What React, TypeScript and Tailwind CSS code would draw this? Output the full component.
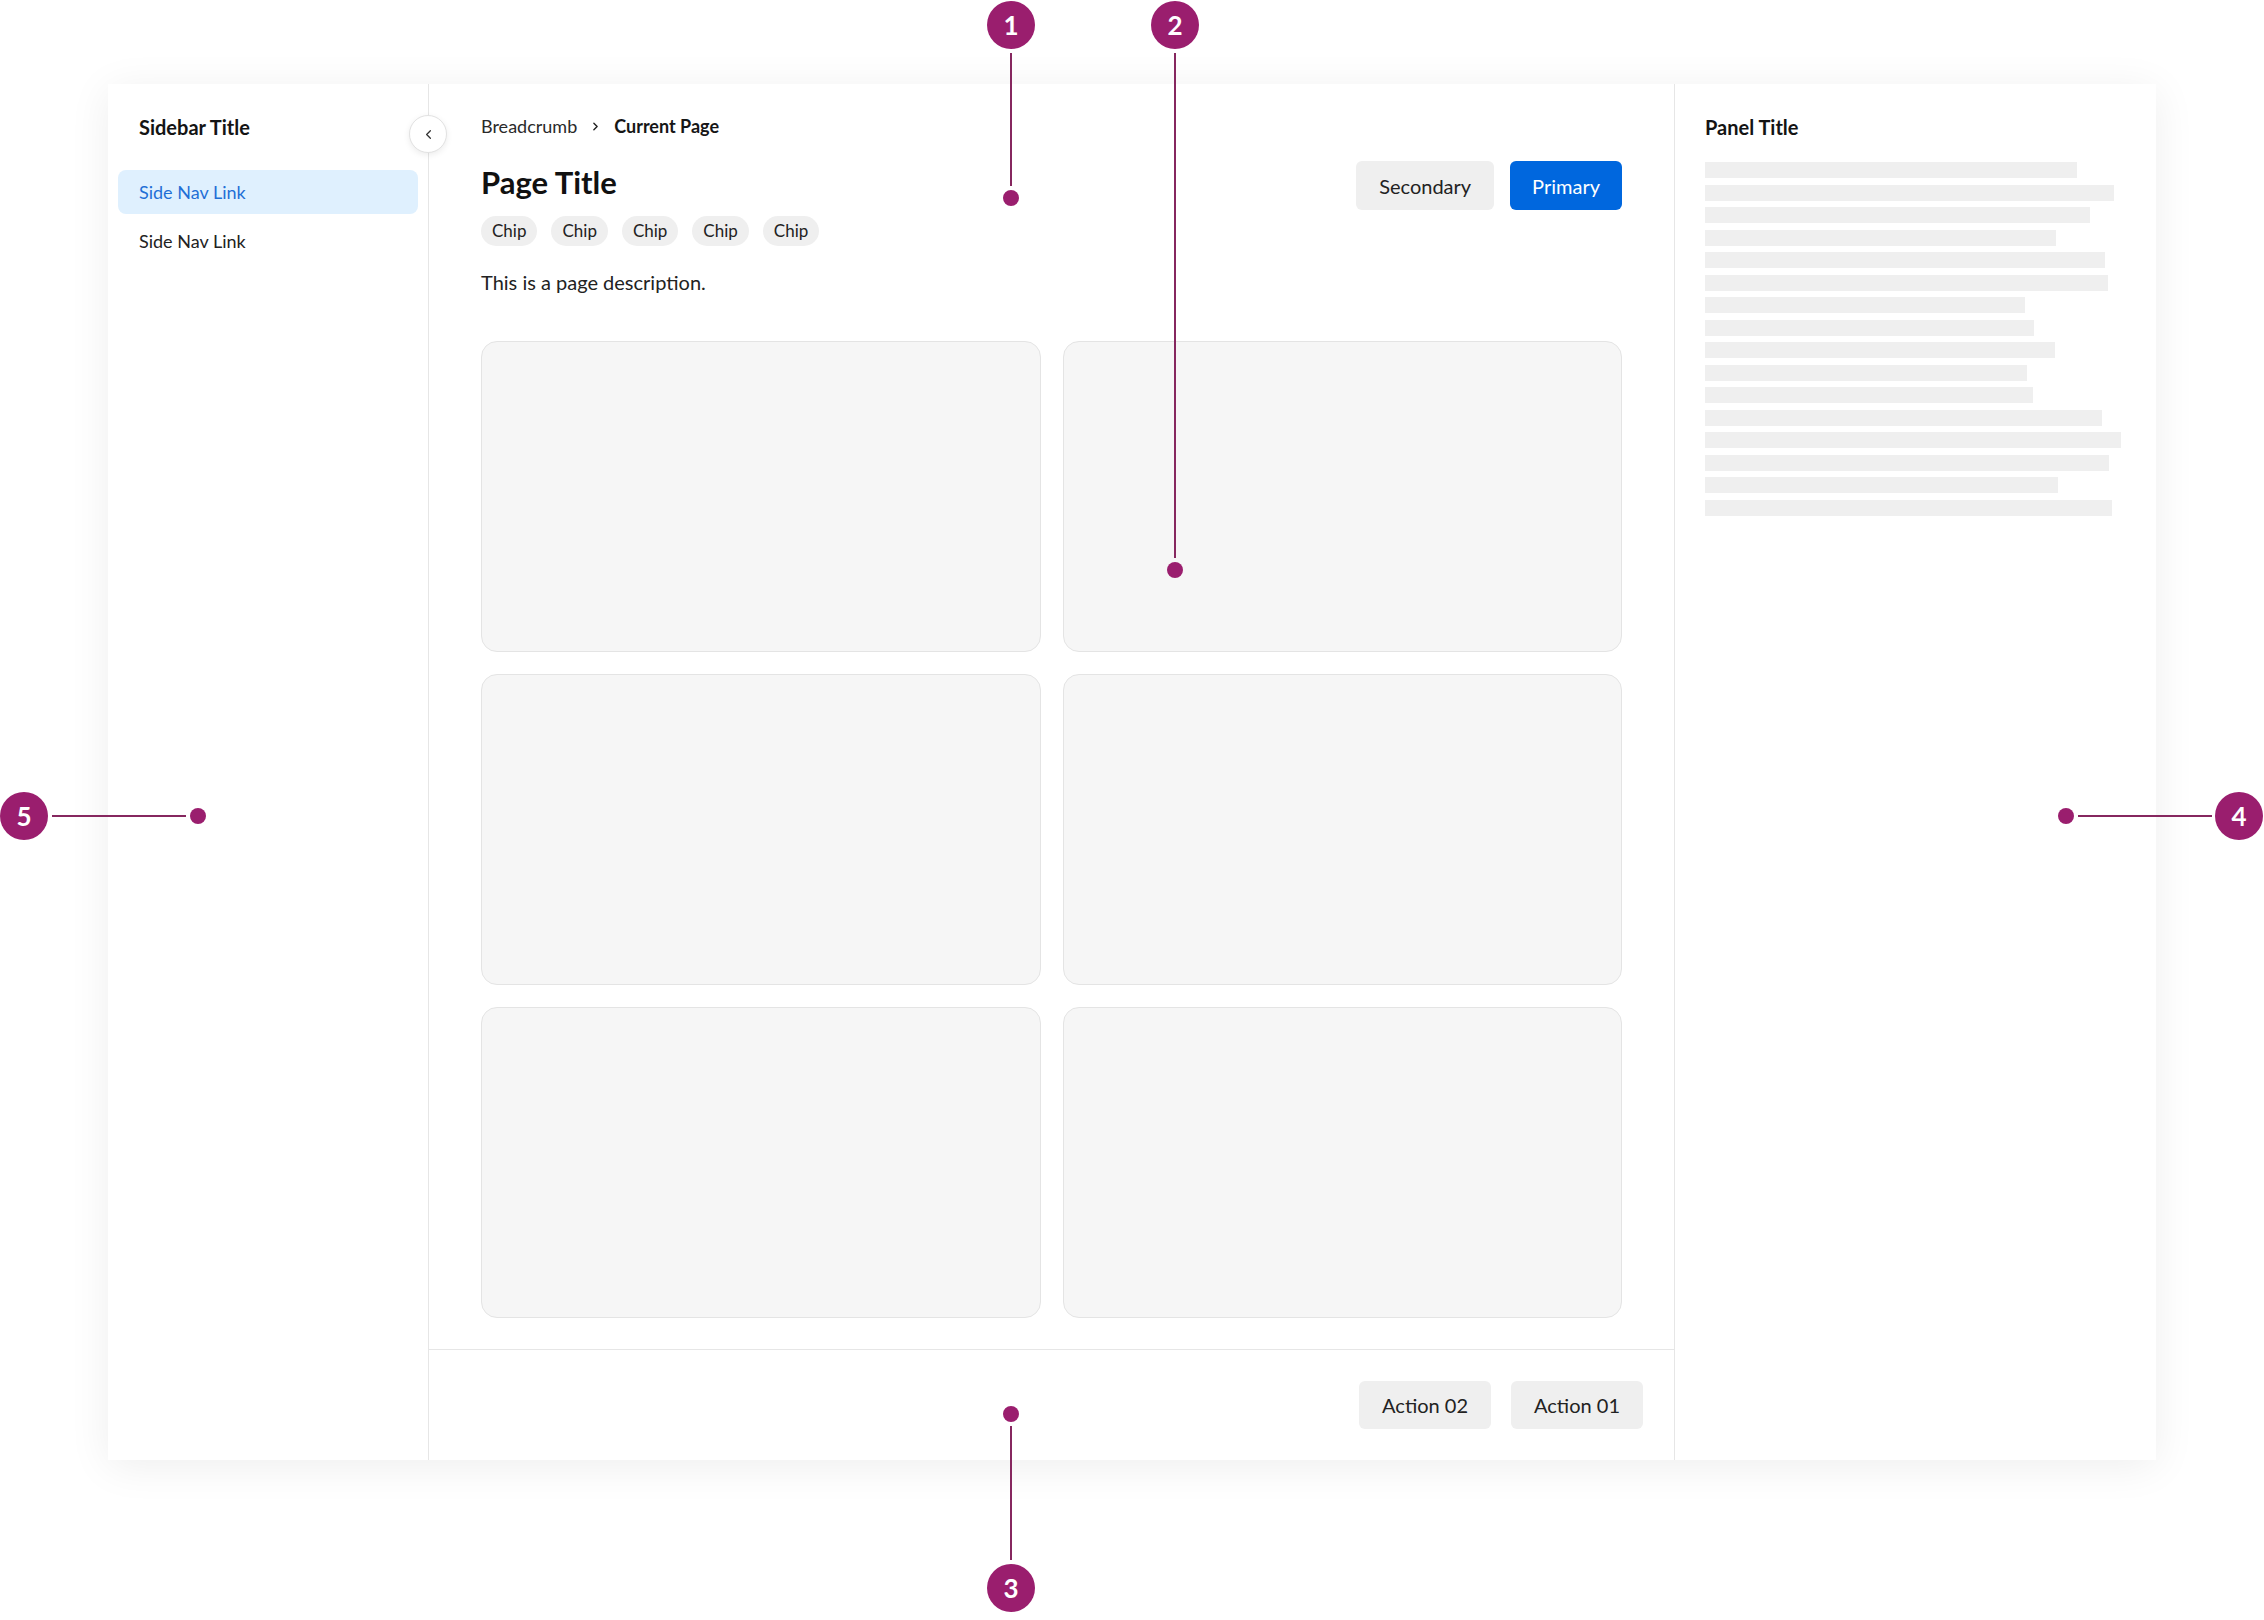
import { ChevronLeft, ChevronRight } from 'lucide-react'

const barWidths = [372, 409, 385, 351, 400, 403, 320, 329, 350, 322, 328, 397, 416, 404, 353, 407]

function Marker({ n, x, y }: { n: number; x: number; y: number }) {
  return (
    <div
      className="absolute w-[48px] h-[48px] rounded-full bg-[#9a1e6e] text-white flex items-center justify-center text-[26px] font-bold leading-none"
      style={{ left: x - 24, top: y - 24 }}
    >
      {n}
    </div>
  )
}

function Dot({ x, y }: { x: number; y: number }) {
  return (
    <div
      className="absolute w-[16px] h-[16px] rounded-full bg-[#9a1e6e]"
      style={{ left: x - 8, top: y - 8 }}
    />
  )
}

function Line({ x, y, w, h }: { x: number; y: number; w: number; h: number }) {
  return <div className="absolute bg-[#86275f]" style={{ left: x, top: y, width: w, height: h }} />
}

export default function App() {
  return (
    <div
      className="relative w-[2264px] h-[1620px] bg-white pt-[84px] pl-[108px] text-[#1c1c1c]"
      style={{ fontFamily: 'Lato, "Open Sans", sans-serif' }}
    >
      {/* Frame */}
      <div className="w-[2048px] h-[1376px] flex bg-white shadow-[0_6px_40px_rgba(0,0,0,0.07)]">
        {/* Sidebar */}
        <aside className="relative w-[321px] shrink-0 border-r border-[#e6e6e6] pt-[31px]">
          <div className="pl-[31px] text-[20px] leading-[24px] font-bold text-[#141414]">Sidebar Title</div>
          <nav className="mt-[31px] mx-[10px] flex flex-col gap-[5px]">
            <a className="h-[44px] flex items-center px-[21px] rounded-lg bg-[#dff0fe] text-[18px] text-[#1f6fd6]">
              Side Nav Link
            </a>
            <a className="h-[44px] flex items-center px-[21px] rounded-lg text-[18px] text-[#222]">
              Side Nav Link
            </a>
          </nav>
          <button className="absolute right-[-19px] top-[31px] w-[38px] h-[38px] rounded-full bg-white border border-[#e2e2e2] shadow-[0_2px_6px_rgba(0,0,0,0.08)] flex items-center justify-center text-[#333]">
            <ChevronLeft size={15} strokeWidth={2} />
          </button>
        </aside>

        {/* Main */}
        <main className="w-[1245px] shrink-0 flex flex-col">
          <div className="flex-1 px-[52px] pt-[31px]">
            <div className="h-[22px] flex items-center text-[18px] text-[#2a2a2a]">
              <span>Breadcrumb</span>
              <ChevronRight size={13} strokeWidth={2.6} className="mx-[12px] text-[#222]" />
              <span className="font-bold text-[#161616]">Current Page</span>
            </div>

            <div className="mt-[27px] flex justify-between items-start">
              <div>
                <h1 className="text-[31px] leading-[36px] font-bold text-[#111]">Page Title</h1>
                <div className="mt-[16px] flex gap-[14px]">
                  {[0, 1, 2, 3, 4].map((i) => (
                    <span
                      key={i}
                      className="h-[30px] px-[11px] rounded-full bg-[#efefef] text-[17px] flex items-center text-[#222]"
                    >
                      Chip
                    </span>
                  ))}
                </div>
              </div>
              <div className="-mt-[3px] flex gap-[16px]">
                <button className="h-[49px] px-[23px] rounded-md bg-[#efefef] text-[20px] text-[#222]">
                  Secondary
                </button>
                <button className="h-[49px] px-[22px] rounded-md bg-[#0067de] text-[20px] text-white">
                  Primary
                </button>
              </div>
            </div>

            <p className="mt-[23px] text-[20px] leading-[26px] text-[#222]">This is a page description.</p>

            <div className="mt-[46px] grid grid-cols-2 gap-x-[22px] gap-y-[22px]">
              {[0, 1, 2, 3, 4, 5].map((i) => (
                <div key={i} className="h-[311px] rounded-[16px] bg-[#f6f6f6] border-[1.5px] border-[#e4e4e4]" />
              ))}
            </div>
          </div>

          <footer className="h-[111px] shrink-0 border-t-[1.5px] border-[#e6e6e6] flex items-center justify-end gap-[20px] pr-[31px]">
            <button className="h-[48px] px-[23px] rounded-md bg-[#efefef] text-[20px] text-[#222]">Action 02</button>
            <button className="h-[48px] px-[23px] rounded-md bg-[#efefef] text-[20px] text-[#222]">Action 01</button>
          </footer>
        </main>

        {/* Right panel */}
        <section className="flex-1 border-l border-[#e6e6e6] pl-[30px] pt-[31px]">
          <div className="text-[20px] leading-[24px] font-bold text-[#141414]">Panel Title</div>
          <div className="mt-[23px] flex flex-col gap-[6.5px]">
            {barWidths.map((w, i) => (
              <div key={i} className="h-[16px] bg-[#efefef]" style={{ width: w }} />
            ))}
          </div>
        </section>
      </div>

      {/* Annotations */}
      <Marker n={1} x={1011} y={25} />
      <Line x={1010} y={53} w={2} h={133} />
      <Dot x={1011} y={198} />

      <Marker n={2} x={1175} y={25} />
      <Line x={1174} y={53} w={2} h={505} />
      <Dot x={1175} y={570} />

      <Marker n={3} x={1011} y={1588} />
      <Line x={1010} y={1426} w={2} h={134} />
      <Dot x={1011} y={1414} />

      <Marker n={4} x={2239} y={816} />
      <Line x={2078} y={815} w={134} h={2} />
      <Dot x={2066} y={816} />

      <Marker n={5} x={24} y={816} />
      <Line x={52} y={815} w={134} h={2} />
      <Dot x={198} y={816} />
    </div>
  )
}
